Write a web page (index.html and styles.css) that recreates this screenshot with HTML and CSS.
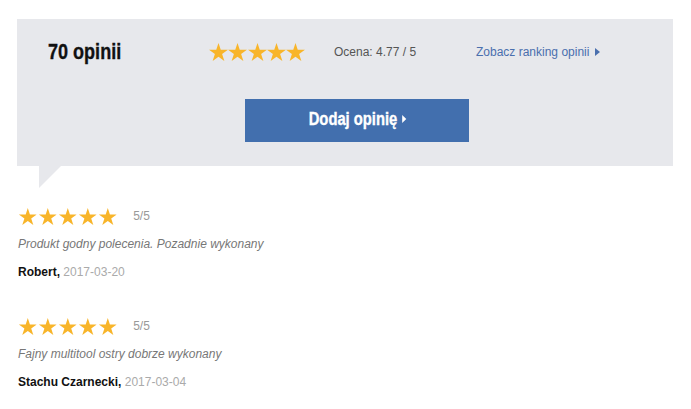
FILE: index.html
```html
<!DOCTYPE html>
<html lang="pl">
<head>
<meta charset="utf-8">
<link rel="stylesheet" href="styles.css">
</head>
<body>
<svg class="defs" width="0" height="0">
  <defs>
    <symbol id="star" viewBox="0 0 19 18.1">
      <polygon points="9.5,0 11.75,6.91 19,6.91 13.13,11.18 15.38,18.09 9.5,13.82 3.62,18.09 5.87,11.18 0,6.91 7.25,6.91"/>
    </symbol>
  </defs>
</svg>
<section class="summary">
  <div class="summary-row">
    <h2 class="count"><span class="narrow">70 opinii</span></h2>
    <div class="stars">
      <svg viewBox="0 0 19 18.1"><use href="#star"/></svg>
      <svg viewBox="0 0 19 18.1"><use href="#star"/></svg>
      <svg viewBox="0 0 19 18.1"><use href="#star"/></svg>
      <svg viewBox="0 0 19 18.1"><use href="#star"/></svg>
      <svg viewBox="0 0 19 18.1"><use href="#star"/></svg>
    </div>
    <div class="score">Ocena: 4.77 / 5</div>
    <a class="ranking" href="#">Zobacz ranking opinii <span class="tri"></span></a>
  </div>
  <button class="add-btn"><span class="narrow btn-label">Dodaj opinię<span class="tri tri-white"></span></span></button>
</section>
<div class="tail"></div>
<div class="reviews">
  <article class="review">
    <div class="review-rating">
      <div class="stars stars-sm">
        <svg viewBox="0 0 19 18.1"><use href="#star"/></svg>
        <svg viewBox="0 0 19 18.1"><use href="#star"/></svg>
        <svg viewBox="0 0 19 18.1"><use href="#star"/></svg>
        <svg viewBox="0 0 19 18.1"><use href="#star"/></svg>
        <svg viewBox="0 0 19 18.1"><use href="#star"/></svg>
      </div>
      <span class="rate">5/5</span>
    </div>
    <p class="review-text">Produkt godny polecenia. Pozadnie wykonany</p>
    <p class="review-author"><b>Robert,</b> <span class="date">2017-03-20</span></p>
  </article>
  <article class="review">
    <div class="review-rating">
      <div class="stars stars-sm">
        <svg viewBox="0 0 19 18.1"><use href="#star"/></svg>
        <svg viewBox="0 0 19 18.1"><use href="#star"/></svg>
        <svg viewBox="0 0 19 18.1"><use href="#star"/></svg>
        <svg viewBox="0 0 19 18.1"><use href="#star"/></svg>
        <svg viewBox="0 0 19 18.1"><use href="#star"/></svg>
      </div>
      <span class="rate">5/5</span>
    </div>
    <p class="review-text">Fajny multitool ostry dobrze wykonany</p>
    <p class="review-author"><b>Stachu Czarnecki,</b> <span class="date">2017-03-04</span></p>
  </article>
</div>
</body>
</html>
```
FILE: styles.css
```css
* { box-sizing: border-box; }
html, body { margin: 0; padding: 0; background: #fff; }
body { font-family: "Liberation Sans", Arial, sans-serif; font-size: 12px; color: #333; }
.defs { position: absolute; width: 0; height: 0; overflow: hidden; }

.narrow {
  display: inline-block;
  font-family: "Liberation Sans", Arial, sans-serif;
  font-weight: bold;
  transform: scaleX(0.82);
  -webkit-text-stroke: 0.35px currentColor;
}

.summary {
  margin: 19px 18px 0 17px;
  background: #e7e8ec;
  padding: 18px 0 24px 31px;
}
.summary-row {
  display: grid;
  grid-template-columns: 161px 125px 142px auto;
  align-items: center;
  height: 30px;
}
.count {
  margin: 0;
  font-size: 22px;
  color: #111;
  white-space: nowrap;
}
.count .narrow { transform-origin: left center; }
.stars { display: flex; gap: 0.3px; fill: #f8b52a; }
.stars svg { width: 19px; height: 18px; display: block; }
.stars-sm svg { width: 19.6px; height: 17px; }
.score { color: #555; font-size: 12px; }
.ranking { color: #4a6fae; text-decoration: none; font-size: 12px; display: flex; align-items: center; gap: 6px; }
.tri {
  display: inline-block;
  width: 0; height: 0;
  border-top: 4px solid transparent;
  border-bottom: 4px solid transparent;
  border-left: 5px solid #4a6fae;
}
.tri-white {
  border-left-color: #fff;
  border-top-width: 4px;
  border-bottom-width: 4px;
  border-left-width: 5px;
  margin-left: 6px;
  vertical-align: 2px;
}

.add-btn {
  display: flex;
  align-items: center;
  justify-content: center;
  margin: 32px 0 0 197px;
  width: 224px;
  height: 43px;
  border: 0;
  background: #426fae;
  color: #fff;
  font-size: 18px;
  padding: 0 0 2px 0;
}
.btn-label { white-space: nowrap; transform-origin: center; }

.tail {
  margin-left: 39px;
  width: 0; height: 0;
  border-top: 22px solid #e7e8ec;
  border-right: 22px solid transparent;
}

.reviews { padding: 14px 0 0 18px; }
.review { margin-bottom: 26px; }
.review-rating { display: flex; align-items: center; height: 28px; gap: 16px; }
.rate { color: #999; font-size: 12px; }
.review-text { margin: 0; line-height: 28px; font-style: italic; color: #777; font-size: 12px; }
.review-author { margin: 0; line-height: 28px; color: #111; font-size: 12px; }
.review-author b { font-weight: bold; }
.date { color: #aaa; font-weight: normal; }
```
